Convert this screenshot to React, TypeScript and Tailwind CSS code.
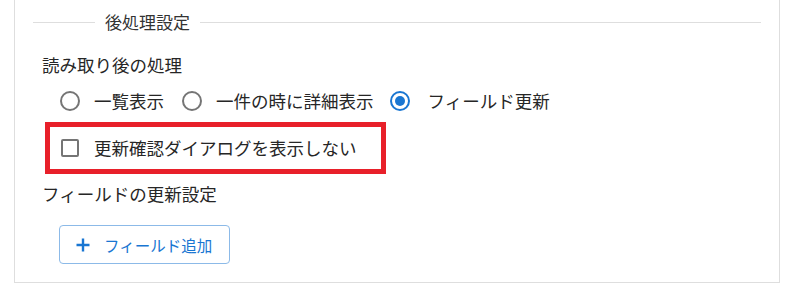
import React from "react";

const font = { fontFamily: '"Noto Sans CJK JP", "Noto Sans", sans-serif' };

function Radio({ checked }: { checked?: boolean }) {
  return (
    <span
      className={
        "flex h-[20px] w-[20px] shrink-0 items-center justify-center rounded-full border-2 " +
        (checked ? "border-[#1976d2]" : "border-[#757575]")
      }
    >
      {checked && <span className="h-[10px] w-[10px] rounded-full bg-[#1976d2]" />}
    </span>
  );
}

export default function App() {
  return (
    <div className="h-[290px] w-[797px] bg-white text-[#262626]" style={font}>
      <div className="ml-[14px] h-[283px] w-[766px] border-x border-b border-[#dedede]">
        {/* legend line */}
        <div className="ml-[18px] mr-[18px] flex items-center pt-[9px]">
          <div className="h-px w-[62px] bg-[#dedede]" />
          <div className="px-[10px] text-[17px] leading-[26px] text-[#333]">後処理設定</div>
          <div className="h-px flex-1 bg-[#dedede]" />
        </div>

        <div className="pl-[27px]">
          <div className="mt-[17px] text-[17.5px] leading-[26px]">読み取り後の処理</div>

          <div className="mt-[10px] ml-[18px] flex items-center text-[17.5px] leading-[26px]">
            <Radio />
            <span className="ml-[14px]">一覧表示</span>
            <span className="ml-[18px]"><Radio /></span>
            <span className="ml-[14px]">一件の時に詳細表示</span>
            <span className="ml-[16px]"><Radio checked /></span>
            <span className="ml-[18px]">フィールド更新</span>
          </div>

          <div className="mt-[8px] ml-[3px] flex h-[52px] w-[341px] items-center border-[5px] border-[#e8202a] pl-[11px]">
            <span className="h-[18px] w-[18px] shrink-0 rounded-[2px] border-2 border-[#757575]" />
            <span className="ml-[15px] text-[17.5px] leading-[26px]">更新確認ダイアログを表示しない</span>
          </div>

          <div className="mt-[7px] text-[17.5px] leading-[26px]">フィールドの更新設定</div>

          <button className="mt-[18px] ml-[17px] flex h-[39px] w-[171px] items-center rounded-[4px] border border-[#8cbae8] pl-[16px] text-[15.5px] text-[#1976d2]">
            <svg width="14" height="14" viewBox="0 0 14 14" className="shrink-0">
              <path d="M7 0.5v13M0.5 7h13" stroke="#1976d2" strokeWidth="2.4" />
            </svg>
            <span className="ml-[14px] leading-[24px]">フィールド追加</span>
          </button>
        </div>
      </div>
    </div>
  );
}
